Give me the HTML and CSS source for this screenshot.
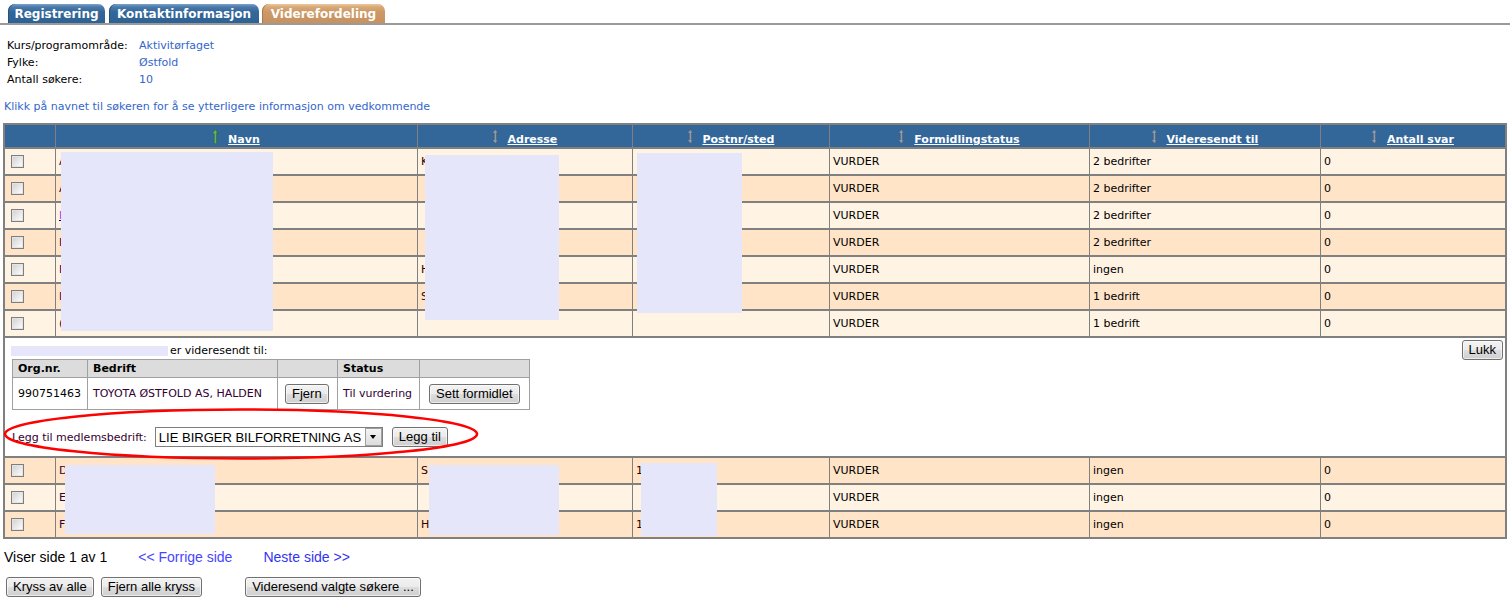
FILE: index.html
```html
<!DOCTYPE html>
<html lang="no">
<head>
<meta charset="utf-8">
<title>Viderefordeling</title>
<link rel="stylesheet" href="styles.css">
</head>
<body>
<svg class="defs" width="0" height="0" aria-hidden="true">
  <defs>
    <linearGradient id="gGreen" x1="0" y1="0" x2="1" y2="0">
      <stop offset="0" stop-color="#a6e0a0"/>
      <stop offset="0.5" stop-color="#5fb55a"/>
      <stop offset="1" stop-color="#2f7a2f"/>
    </linearGradient>
    <linearGradient id="gGray" x1="0" y1="0" x2="1" y2="0">
      <stop offset="0" stop-color="#b9c3cf"/>
      <stop offset="0.5" stop-color="#8d9aaa"/>
      <stop offset="1" stop-color="#5f6d7e"/>
    </linearGradient>
    <symbol id="sortUp" viewBox="0 0 11 15">
      <polygon points="2.5,0.5 5.2,4.5 3.6,4.5 3.6,14.5 1.4,14.5 1.4,4.5 -0.2,4.5" fill="url(#gGreen)" stroke="#2b6a2b" stroke-width="0.5"/>
    </symbol>
    <symbol id="sortBoth" viewBox="0 0 11 15">
      <polygon points="2.5,0.5 5.2,4 3.6,4 3.6,11 5.2,11 2.5,14.5 -0.2,11 1.4,11 1.4,4 -0.2,4" fill="url(#gGray)" stroke="#4d5b6b" stroke-width="0.5"/>
    </symbol>
  </defs>
</svg>

<div class="tabs">
  <a class="tab tab-blue t1">Registrering</a>
  <a class="tab tab-blue t2">Kontaktinformasjon</a>
  <a class="tab tab-orange t3">Viderefordeling</a>
</div>

<div class="info">
  <span>Kurs/programområde:</span><a class="ilink">Aktivitørfaget</a>
  <span>Fylke:</span><a class="ilink">Østfold</a>
  <span>Antall søkere:</span><a class="ilink">10</a>
</div>

<p class="hint">Klikk på navnet til søkeren for å se ytterligere informasjon om vedkommende</p>

<div class="grid-wrap">
  <table class="grid">
    <thead>
      <tr>
        <th class="c1"></th>
        <th class="c2"><svg class="sort"><use href="#sortUp"/></svg> <a class="hlink">Navn</a></th>
        <th class="c3"><svg class="sort"><use href="#sortBoth"/></svg> <a class="hlink">Adresse</a></th>
        <th class="c4"><svg class="sort"><use href="#sortBoth"/></svg> <a class="hlink">Postnr/sted</a></th>
        <th class="c5"><svg class="sort"><use href="#sortBoth"/></svg> <a class="hlink">Formidlingstatus</a></th>
        <th class="c6"><svg class="sort"><use href="#sortBoth"/></svg> <a class="hlink">Videresendt til</a></th>
        <th class="c7"><svg class="sort"><use href="#sortBoth"/></svg> <a class="hlink">Antall svar</a></th>
      </tr>
    </thead>
    <tbody>
      <tr class="lt"><td class="cb"><input type="checkbox" class="chk"></td><td class="nm">A</td><td class="ad">K</td><td></td><td>VURDER</td><td>2 bedrifter</td><td class="last">0</td></tr>
      <tr class="dk"><td class="cb"><input type="checkbox" class="chk"></td><td class="nm">A</td><td></td><td></td><td>VURDER</td><td>2 bedrifter</td><td class="last">0</td></tr>
      <tr class="lt"><td class="cb"><input type="checkbox" class="chk"></td><td class="nm"><a class="visited">I</a></td><td></td><td></td><td>VURDER</td><td>2 bedrifter</td><td class="last">0</td></tr>
      <tr class="dk"><td class="cb"><input type="checkbox" class="chk"></td><td class="nm">I</td><td></td><td></td><td>VURDER</td><td>2 bedrifter</td><td class="last">0</td></tr>
      <tr class="lt"><td class="cb"><input type="checkbox" class="chk"></td><td class="nm">I</td><td class="ad">H</td><td></td><td>VURDER</td><td>ingen</td><td class="last">0</td></tr>
      <tr class="dk"><td class="cb"><input type="checkbox" class="chk"></td><td class="nm">I</td><td class="ad">S</td><td></td><td>VURDER</td><td>1 bedrift</td><td class="last">0</td></tr>
      <tr class="lt"><td class="cb"><input type="checkbox" class="chk"></td><td class="nm">(</td><td></td><td></td><td>VURDER</td><td>1 bedrift</td><td class="last">0</td></tr>
      <tr class="detail">
        <td colspan="7" class="detail-cell">
          <button class="btn lukk">Lukk</button>
          <div class="sent-line"><span class="redact-inline"></span>er videresendt til:</div>
          <table class="sent">
            <thead>
              <tr><th class="s1">Org.nr.</th><th class="s2">Bedrift</th><th class="s3"></th><th class="s4">Status</th><th class="s5"></th></tr>
            </thead>
            <tbody>
              <tr>
                <td class="org">990751463</td>
                <td class="dark">TOYOTA ØSTFOLD AS, HALDEN</td>
                <td class="mid"><button class="btn">Fjern</button></td>
                <td class="dark">Til vurdering</td>
                <td class="mid"><button class="btn">Sett formidlet</button></td>
              </tr>
            </tbody>
          </table>
          <div class="add-row">
            <label class="add-label">Legg til medlemsbedrift:</label>
            <span class="select-wrap">
              <select class="sel"><option>LIE BIRGER BILFORRETNING AS</option></select>
              <span class="sel-arrow"></span>
            </span>
            <button class="btn add-btn">Legg til</button>
          </div>
        </td>
      </tr>
      <tr class="dk"><td class="cb"><input type="checkbox" class="chk"></td><td class="nm">D</td><td class="ad">S</td><td class="ad">1</td><td>VURDER</td><td>ingen</td><td class="last">0</td></tr>
      <tr class="lt"><td class="cb"><input type="checkbox" class="chk"></td><td class="nm">E</td><td></td><td></td><td>VURDER</td><td>ingen</td><td class="last">0</td></tr>
      <tr class="dk"><td class="cb"><input type="checkbox" class="chk"></td><td class="nm">F</td><td class="ad">H</td><td class="ad">1</td><td>VURDER</td><td>ingen</td><td class="last">0</td></tr>
    </tbody>
  </table>

  <div class="redact r1"></div>
  <div class="redact r2"></div>
  <div class="redact r3"></div>
  <div class="redact r5"></div>
  <div class="redact r6"></div>
  <div class="redact r7"></div>
  <svg class="circle" viewBox="0 0 476 52" width="476" height="52" aria-hidden="true">
    <ellipse cx="238" cy="26" rx="236" ry="24.5" fill="none" stroke="#ff0000" stroke-width="2.6"/>
  </svg>
</div>

<div class="pager">
  <span>Viser side 1 av 1</span>
  <a class="plink prev">&lt;&lt; Forrige side</a>
  <a class="plink">Neste side &gt;&gt;</a>
</div>

<div class="actions">
  <button class="btn">Kryss av alle</button>
  <button class="btn">Fjern alle kryss</button>
  <button class="btn forward">Videresend valgte søkere ...</button>
</div>
</body>
</html>
```

FILE: styles.css
```css
body {
  margin: 0;
  font-family: "DejaVu Sans", Verdana, sans-serif;
  font-size: 11px;
  color: #000;
  background: #fff;
}

.defs {
  position: absolute;
  width: 0;
  height: 0;
  overflow: hidden;
}

/* Tabs */
.tabs {
  display: flex;
  padding: 4px 0 0 8px;
  border-bottom: 2px solid #9a9a9a;
  box-sizing: border-box;
  height: 25px;
}
.tab {
  display: block;
  height: 19px;
  line-height: 20px;
  font-size: 12px;
  font-weight: bold;
  color: #fff;
  text-align: center;
  border-radius: 7px 7px 0 0;
}
.tab-blue {
  background: linear-gradient(#7ea2c8 0, #4a7aab 3px, #336699 8px, #2e6194 100%);
  box-shadow: inset 1px 0 0 #27507a;
}
.tab-orange {
  background: linear-gradient(#ecc9a0 0, #d8a878 3px, #cc9966 8px, #c79260 100%);
  box-shadow: inset 1px 0 0 #a8774a;
}
.t1 { width: 97px; }
.t2 { width: 150px; margin-left: 4px; }
.t3 { width: 123px; margin-left: 3px; }

/* Info */
.info {
  display: grid;
  grid-template-columns: 132px auto;
  justify-items: start;
  line-height: 17px;
  padding: 12px 0 0 7px;
}
.ilink { color: #3366cc; }

.hint {
  margin: 10px 0 0 4px;
  line-height: 17px;
  color: #3366cc;
}

/* Grid */
.grid-wrap {
  position: relative;
  margin: 8px 0 0 3px;
  width: 1504px;
}
.grid {
  border-collapse: separate;
  border-spacing: 0;
  table-layout: fixed;
  width: 1504px;
  border-top: 2px solid #808080;
  border-left: 2px solid #808080;
}
.grid th,
.grid td {
  box-sizing: border-box;
  border-right: 1px solid #808080;
  border-bottom: 2px solid #808080;
  padding: 0 3px;
}
.grid th {
  height: 24px;
  background: #336699;
  color: #fff;
  font-weight: bold;
  text-align: center;
  vertical-align: middle;
  white-space: nowrap;
  padding-top: 2px;
}
.grid th.c7,
.grid td.last { border-right-width: 2px; }
.c1 { width: 51px; }
.c2 { width: 362px; }
.c3 { width: 215px; }
.c4 { width: 197px; }
.c5 { width: 260px; }
.c6 { width: 231px; }
.c7 { width: 186px; }

.sort {
  width: 11px;
  height: 15px;
  vertical-align: -1px;
}
.hlink {
  color: #fff;
  text-decoration: underline;
}

.grid td {
  height: 27px;
  vertical-align: middle;
  white-space: nowrap;
  overflow: hidden;
}
.lt td { background: #fff3e3; }
.dk td { background: #ffe4c8; }

.grid td.cb { padding-left: 6px; }
.chk {
  -webkit-appearance: none;
  appearance: none;
  display: block;
  width: 13px;
  height: 13px;
  margin: 0;
  border: 1px solid #7e7e7e;
  background: linear-gradient(135deg, #cfcfcf 0%, #efefef 65%, #ffffff 100%);
  box-shadow: inset 0 0 0 1px #e4e4e4;
}
.nm { color: #330033; }
.ad { color: #330000; }
.visited { color: #9933ff; text-decoration: underline; text-decoration-color: #000080; }

/* Detail row */
.grid td.detail-cell {
  height: 120px;
  background: #fff;
  vertical-align: top;
  padding: 2px 2px 0 6px;
  border-right-width: 2px;
}
.lukk { float: right; }

.sent-line {
  margin-top: 3px;
  line-height: 16px;
  color: #000;
}
.redact-inline {
  display: inline-block;
  width: 157px;
  height: 10px;
  margin-right: 2px;
  background: #e6e6fa;
  vertical-align: -2px;
}

.sent {
  margin-left: 1px;
  border-collapse: collapse;
  table-layout: fixed;
  width: 517px;
  border: 1px solid #a0a0a0;
}
.grid .sent th,
.grid .sent td {
  box-sizing: border-box;
  border: 1px solid #a0a0a0;
  padding: 0 5px;
  text-align: left;
  color: #000;
  background: #fff;
}
.grid .sent th {
  height: 18px;
  background: #dcdcdc;
  font-weight: bold;
}
.grid .sent td {
  height: 32px;
}
.s1 { width: 75px; }
.s2 { width: 190px; }
.s3 { width: 60px; }
.s4 { width: 82px; }
.s5 { width: 110px; }
.grid .sent td.dark { color: #330033; }
.grid .sent td.mid { padding-left: 7px; }
.grid .sent td:last-child { padding-left: 9px; }

.add-row {
  display: flex;
  align-items: center;
  margin: 17px 0 0 1px;
  height: 20px;
}
.add-label { color: #330033; margin-right: 8px; }
.select-wrap {
  position: relative;
  display: inline-block;
  flex: none;
  width: 228px;
  height: 20px;
}
.sel {
  -webkit-appearance: none;
  appearance: none;
  width: 228px;
  height: 20px;
  margin: 0;
  padding: 0 0 0 3px;
  border: 1px solid #7f7f7f;
  border-radius: 0;
  background: #fff;
  color: #000;
  font-family: "Liberation Sans", Arial, sans-serif;
  font-size: 13px;
}
.sel-arrow {
  position: absolute;
  right: 1px;
  top: 1px;
  width: 17px;
  height: 18px;
  box-sizing: border-box;
  border: 1px solid #a0a0a0;
  background: linear-gradient(#f4f4f4, #dcdcdc);
}
.sel-arrow::after {
  content: "";
  position: absolute;
  left: 4px;
  top: 6px;
  border-left: 3.5px solid transparent;
  border-right: 3.5px solid transparent;
  border-top: 4px solid #000;
}

/* Buttons */
.btn {
  height: 20px;
  padding: 0 6px;
  margin: 0;
  border: 1px solid #707070;
  border-radius: 3px;
  background: linear-gradient(#f3f3f3 0%, #ebebeb 48%, #dddddd 52%, #cfcfcf 100%);
  box-shadow: inset 0 0 0 1px rgba(255, 255, 255, 0.6);
  color: #000;
  font-family: "Liberation Sans", Arial, sans-serif;
  font-size: 13px;
  line-height: 16px;
}
.btn.add-btn { margin-left: 9px; }
.btn.forward { margin-left: 36px; }

/* Redaction overlays */
.redact {
  position: absolute;
  background: #e6e6fa;
}
.r1 { left: 58px; top: 29px; width: 212px; height: 179px; }
.r2 { left: 422px; top: 32px; width: 134px; height: 165px; }
.r3 { left: 634px; top: 30px; width: 105px; height: 160px; }
.r5 { left: 62px; top: 342px; width: 150px; height: 69px; }
.r6 { left: 426px; top: 342px; width: 130px; height: 70px; }
.r7 { left: 638px; top: 340px; width: 76px; height: 73px; }

.circle {
  position: absolute;
  left: 0;
  top: 285px;
}

/* Pager */
.pager {
  display: flex;
  gap: 31px;
  margin-top: 10px;
  padding-left: 4px;
  font-family: "Liberation Sans", Arial, sans-serif;
  font-size: 14px;
  line-height: 17px;
}
.plink { color: #3333ee; }
.prev { color: #4646ff; }

.actions {
  display: flex;
  gap: 7px;
  margin-top: 11px;
  padding-left: 6px;
}
```
